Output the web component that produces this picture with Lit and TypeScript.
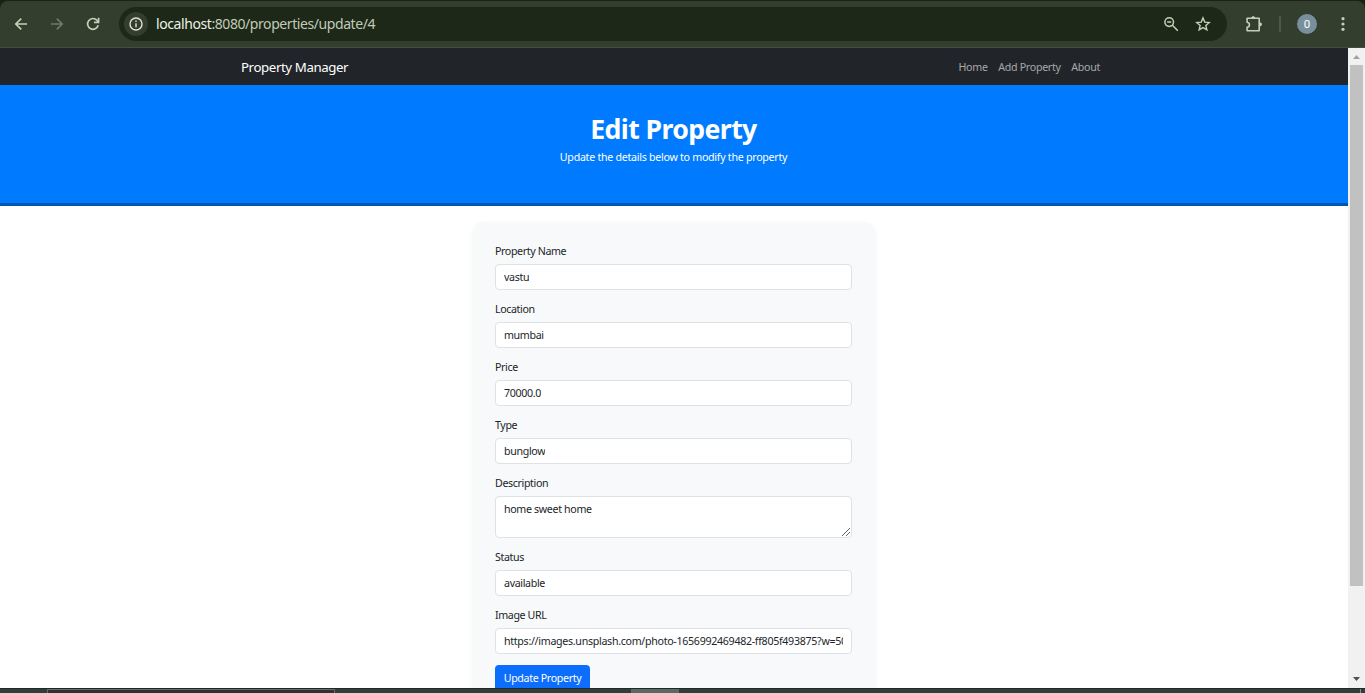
import { LitElement, html, css, svg } from "lit";
import { customElement } from "lit/decorators.js";

interface Field {
  label: string;
  value: string;
  cls: string;
  area?: boolean;
}

const fields: Field[] = [
  { label: "Property Name", value: "vastu", cls: "" },
  { label: "Location", value: "mumbai", cls: "" },
  { label: "Price", value: "70000.0", cls: "" },
  { label: "Type", value: "bunglow", cls: "" },
  { label: "Description", value: "home sweet home", cls: "", area: true },
  { label: "Status", value: "available", cls: "" },
  {
    label: "Image URL",
    value: "https://images.unsplash.com/photo-1656992469482-ff805f493875?w=500",
    cls: "url",
  },
];

@customElement("browser-bar")
export class BrowserBar extends LitElement {
  static styles = css`
    :host { display: block; height: 48px; flex: none; background: #18230f; }
    .bar {
      box-sizing: border-box; height: 48px; display: flex; align-items: center;
      background: #343e2e; border-top: 1px solid #18240f; border-bottom: 1px solid #434f3b;
      border-radius: 8px 8px 0 0;
    }
    svg { display: block; flex: none; }
    .nav { display: flex; gap: 20px; padding-left: 13px; }
    .omni {
      margin-left: 18px; width: 1108px; height: 34px; border-radius: 17px; background: #1d2819;
      display: flex; align-items: center; box-sizing: border-box; padding: 0 16px 0 5px;
    }
    .info { width: 24px; height: 24px; border-radius: 50%; background: #343e2e; display: grid; place-items: center; }
    .addr {
      margin-left: 8px; flex: 1; white-space: nowrap; color: #c0cbb6;
      font: 14px/20px "Noto Sans", sans-serif; letter-spacing: -0.42px;
    }
    .host { color: #eaf1e3; }
    .icons { display: flex; gap: 16px; }
    .ext { margin-left: 18px; }
    .sep { width: 2px; height: 16px; background: #4c5944; margin-left: 16px; }
    .avatar {
      margin-left: 16px; width: 20px; height: 20px; border-radius: 50%; background: #78909c;
      color: #fff; font: 11.5px/20px "Roboto", sans-serif; text-align: center;
    }
    .dots { margin-left: 18px; }
  `;

  render() {
    return html`
      <div class="bar">
        <div class="nav">
          <svg width="16" height="16" viewBox="0 0 16 16" fill="none" stroke="#c3d0b7" stroke-width="1.7">
            <path d="M14 8H3M8.2 2.6 2.8 8l5.4 5.4" />
          </svg>
          <svg width="16" height="16" viewBox="0 0 16 16" fill="none" stroke="#6e7a65" stroke-width="1.7">
            <path d="M2 8h11M7.8 2.6 13.2 8l-5.4 5.4" />
          </svg>
          <svg width="16" height="16" viewBox="0 0 16 16" fill="none" stroke="#c3d0b7" stroke-width="1.7">
            <path d="M13.2 9.3A5.4 5.4 0 1 1 12 4.3L13.3 5.8M13.6 1.8V6.4H9" />
          </svg>
        </div>
        <div class="omni">
          <div class="info">
            <svg width="14" height="14" viewBox="0 0 14 14" fill="none" stroke="#dce5d3" stroke-width="1.4">
              <circle cx="7" cy="7" r="6" /><path d="M7 6.2v4M7 3.6v1.5" />
            </svg>
          </div>
          <div class="addr"><span class="host">localhost</span>:8080/properties/update/4</div>
          <div class="icons">
            <svg width="16" height="16" viewBox="0 0 16 16" fill="none" stroke="#c3d0b7" stroke-width="1.5">
              <circle cx="6.2" cy="6.1" r="4.3" /><path d="M9.4 9.3 14.8 14.7M4.2 6.1h4" />
            </svg>
            <svg width="16" height="16" viewBox="0 0 16 16" fill="none" stroke="#c3d0b7" stroke-width="1.4">
              <path d="m8 1.9 1.75 4.2 4.5.4-3.4 3 1 4.4L8 11.6l-3.85 2.3 1-4.4-3.4-3 4.5-.4Z" />
            </svg>
          </div>
        </div>
        <svg class="ext" width="18" height="18" viewBox="0 0 18 18" fill="none" stroke="#c3d0b7" stroke-width="1.6">
          <path d="M2.6 3.3H14.2V15.7H2.1V12.3C5.2 11.6 5.2 7.8 2.1 7.2V3.3Z" stroke-linejoin="round" />
          <path d="M6.2 3C6.4.5 10 .5 10.2 3ZM14.5 7.2C17.8 7.4 17.8 11.2 14.5 11.4Z" fill="#c3d0b7" stroke="none" />
        </svg>
        <div class="sep"></div>
        <div class="avatar">0</div>
        <svg class="dots" width="16" height="16" viewBox="0 0 16 16" fill="#c3d0b7">
          <circle cx="8" cy="2.7" r="1.6" /><circle cx="8" cy="8" r="1.6" /><circle cx="8" cy="13.3" r="1.6" />
        </svg>
      </div>
    `;
  }
}

@customElement("scroll-track")
export class ScrollTrack extends LitElement {
  static styles = css`
    :host { display: flex; flex-direction: column; width: 17px; flex: none; background: #f1f1f1; }
    .btn { height: 17px; flex: none; }
    .room { flex: 1; padding: 0 2px; }
    .thumb { height: 521px; background: #c1c1c1; }
    svg { display: block; }
  `;
  render() {
    return html`
      <div class="btn"><svg width="17" height="17" fill="#a3a3a3"><path d="M5 11 8.5 7 12 11Z" /></svg></div>
      <div class="room"><div class="thumb"></div></div>
      <div class="btn"><svg width="17" height="17" fill="#505050"><path d="M5 6H12L8.5 10Z" /></svg></div>
    `;
  }
}

@customElement("app-root")
export class AppRoot extends LitElement {
  static styles = css`
    :host {
      display: flex; flex-direction: column; height: 693px; overflow: hidden; background: #fff;
      font-family: "Noto Sans", "Open Sans", sans-serif; color: #212529;
    }
    .view { display: flex; height: 640px; flex: none; }
    .page { flex: 1; min-width: 0; overflow: hidden; }
    .navbar {
      height: 37px; box-sizing: border-box; background: #212529; display: flex; align-items: center;
      justify-content: space-between; padding: 0 248px 0 241px;
    }
    .brand { color: #fff; font-size: 13.3px; letter-spacing: -0.42px; }
    .links { display: flex; gap: 10.6px; color: #a6a8a9; font-size: 10.67px; letter-spacing: -0.3px; }
    .hero {
      height: 121px; box-sizing: border-box; background: #007bff; border-bottom: 3px solid #0056b3;
      color: #fff; text-align: center; padding: 27px 1px 0 0;
    }
    h1 { margin: 0; font-size: 26.67px; line-height: 34px; font-weight: 700; letter-spacing: -0.6px; }
    .sub { margin: 3px 0 0; font-size: 10.67px; line-height: 16px; letter-spacing: -0.28px; }
    .card {
      box-sizing: border-box; width: 402px; height: 520px; margin: 16px auto 0; padding: 21px 23px 21px 22px;
      background: #f8f9fa; border-radius: 10px; box-shadow: 0 2px 5px rgba(0, 0, 0, 0.06);
    }
    .field { margin-bottom: 11px; }
    .label { display: block; height: 21px; font-size: 10.67px; line-height: 16px; letter-spacing: -0.38px; }
    .control {
      box-sizing: border-box; height: 26px; border: 1px solid #dee2e6; border-radius: 4px; background: #fff;
      padding: 4px 8px; font-size: 10.67px; line-height: 16px; letter-spacing: -0.35px; display: flex;
    }
    .control.url { letter-spacing: -0.305px; }
    .area { height: 42px; padding-right: 0; padding-bottom: 0; justify-content: space-between; }
    .grip { align-self: flex-end; display: block; }
    .text { overflow: hidden; white-space: nowrap; }
    .button {
      width: 95px; height: 26px; border-radius: 4px; background: #0d6efd; color: #fff; text-align: center;
      font-size: 10.67px; line-height: 26px; letter-spacing: -0.35px; white-space: nowrap;
    }
    .taskbar {
      height: 5px; flex: none; box-sizing: border-box; border-top: 1px solid #20282a;
      background: #2c4039; display: flex;
    }
    .search { margin-left: 47px; width: 286px; border: 1px solid #666a69; border-bottom: 0; background: #303332; }
    .active { margin-left: 296px; width: 48px; background: #5b6965; }
    .peek { margin-left: auto; margin-right: 4px; width: 1px; background: #87918e; }
  `;

  private field(f: Field) {
    return html`
      <div class="field">
        <span class="label">${f.label}</span>
        <div class="control ${f.area ? "area" : ""} ${f.cls}">
          <span class="text">${f.value}</span>
          ${f.area
            ? html`<svg class="grip" width="12" height="12" fill="none" stroke="#666" stroke-width="1">
                ${svg`<path d="M3 11 11 3M7 11 11 7" />`}
              </svg>`
            : ""}
        </div>
      </div>
    `;
  }

  render() {
    return html`
      <browser-bar></browser-bar>
      <div class="view">
        <div class="page">
          <div class="navbar">
            <span class="brand">Property Manager</span>
            <div class="links"><span>Home</span><span>Add Property</span><span>About</span></div>
          </div>
          <div class="hero">
            <h1>Edit Property</h1>
            <p class="sub">Update the details below to modify the property</p>
          </div>
          <div class="card">
            ${fields.map((f) => this.field(f))}
            <div class="button">Update Property</div>
          </div>
        </div>
        <scroll-track></scroll-track>
      </div>
      <div class="taskbar"><div class="search"></div><div class="active"></div><div class="peek"></div></div>
    `;
  }
}
